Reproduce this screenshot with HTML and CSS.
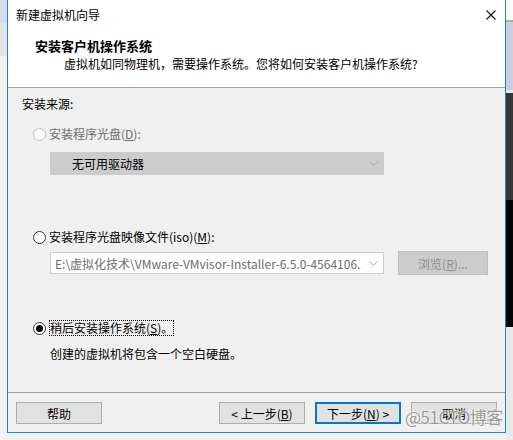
FILE: index.html
```html
<!DOCTYPE html>
<html lang="zh-CN">
<head>
    <meta charset="UTF-8">
    <title>新建虚拟机向导</title>
    <link rel="stylesheet" href="styles.css">
</head>
<body>
    <div class="desktop">
        <div class="side side-left"></div>

        <!-- Janela do assistente -->
        <div class="dialog">
            <div class="titlebar">
                <span>新建虚拟机向导</span>
                <svg class="close" width="10" height="10" viewBox="0 0 10 10">
                    <path d="M0.5 0.5 L9.5 9.5 M9.5 0.5 L0.5 9.5" stroke="#111" stroke-width="1.1"/>
                </svg>
            </div>

            <div class="header">
                <h1>安装客户机操作系统</h1>
                <p>虚拟机如同物理机，需要操作系统。您将如何安装客户机操作系统?</p>
            </div>

            <div class="content">
                <div class="group-label">安装来源:</div>

                <label class="radio disabled"><span class="dot"></span>安装程序光盘(<u>D</u>):</label>
                <div class="combo combo-off">
                    <span class="combo-text">无可用驱动器</span>
                    <svg class="chevron" width="9" height="5" viewBox="0 0 9 5"><path d="M0.5 0.5 L4.5 4.5 L8.5 0.5" fill="none" stroke="#aaa"/></svg>
                </div>

                <label class="radio radio-iso"><span class="dot"></span>安装程序光盘映像文件(iso)(<u>M</u>):</label>
                <div class="file-row">
                    <div class="combo combo-file">
                        <span class="combo-text">E:\虚拟化技术\VMware-VMvisor-Installer-6.5.0-4564106.x86_64.iso</span>
                        <svg class="chevron" width="9" height="5" viewBox="0 0 9 5"><path d="M0.5 0.5 L4.5 4.5 L8.5 0.5" fill="none" stroke="#aaa"/></svg>
                    </div>
                    <button class="btn btn-browse" disabled>浏览(<u>R</u>)...</button>
                </div>

                <label class="radio radio-later checked"><span class="dot"></span><span class="focus">稍后安装操作系统(<u>S</u>)。</span></label>
                <p class="note">创建的虚拟机将包含一个空白硬盘。</p>
            </div>

            <div class="footer">
                <button class="btn">帮助</button>
                <div class="spacer"></div>
                <button class="btn">&lt; 上一步(<u>B</u>)</button>
                <button class="btn btn-default">下一步(<u>N</u>) &gt;</button>
                <button class="btn">取消</button>
            </div>
        </div>

        <div class="side side-right"></div>
    </div>

    <div class="watermark">@51CTO博客</div>
</body>
</html>
```

FILE: styles.css
```css
* {
    box-sizing: border-box;
}

body {
    margin: 0;
    font-family: "Noto Sans CJK SC", "Noto Sans", sans-serif;
    font-size: 12px;
    color: #000;
    background-color: #f2f2f2;
    overflow: hidden;
}

.desktop {
    display: flex;
    height: 440px;
    position: relative;
}

.side-left {
    width: 7px;
    background: linear-gradient(to bottom, #d5dce7 0, #d5dce7 22px, #e4e4e4 22px, #e4e4e4 56px, #f3f3f3 56px);
}

.side-right {
    flex: 1;
    background: linear-gradient(to bottom, #fbfbfb 0, #fbfbfb 20px, #a9a9a9 20px, #a9a9a9 22px,
        #c9d0dc 22px, #c9d0dc 90px, #e8e8e8 90px, #e8e8e8 93px, #353535 93px, #353535 200px,
        #050505 200px, #050505 327px, #e9e9e9 327px);
}

.dialog {
    width: 499px;
    height: 433px;
    background-color: #f0f0f0;
    border: 1px solid #1883d7;
    border-top: none;
    display: flex;
    flex-direction: column;
}

.titlebar {
    height: 30px;
    background-color: #fff;
    display: flex;
    align-items: center;
    justify-content: space-between;
    padding: 0 9px 0 8px;
    line-height: 16px;
}

.header {
    height: 58px;
    background-color: #fff;
    border-bottom: 1px solid #a0a0a0;
    padding: 8px 0 0 27px;
}

.header h1 {
    margin: 0;
    font-size: 13px;
    font-weight: bold;
    line-height: 16px;
}

.header p {
    margin: 2px 0 0 29px;
    line-height: 16px;
}

.content {
    height: 305px;
    border-bottom: 1px solid #a0a0a0;
    padding: 8px 0 0 14px;
}

.group-label {
    line-height: 16px;
}

.radio {
    display: flex;
    align-items: center;
    line-height: 16px;
    margin-left: 11px;
    margin-top: 14px;
}

.radio .dot {
    width: 13px;
    height: 13px;
    border: 1px solid #333;
    border-radius: 50%;
    background-color: #fff;
    margin-right: 3px;
    display: flex;
    align-items: center;
    justify-content: center;
}

.radio.disabled {
    color: #6d6d6d;
}

.radio.disabled .dot {
    border-color: #bcbcbc;
}

.radio.checked .dot::after {
    content: "";
    width: 7px;
    height: 7px;
    border-radius: 50%;
    background-color: #000;
}

.radio-iso {
    margin-top: 54px;
}

.radio-later {
    margin-top: 45px;
}

.focus {
    border: 1px dotted #000;
    line-height: 14px;
}

.combo {
    display: flex;
    align-items: center;
    justify-content: space-between;
    margin-left: 28px;
    width: 334px;
    border: 1px solid #cccccc;
    padding: 0 5px 0 4px;
}

.combo-text {
    white-space: nowrap;
    overflow: hidden;
    flex: 1;
}

.combo-off {
    height: 23px;
    margin-top: 10px;
    background-color: #cccccc;
    padding-left: 21px;
}

.chevron {
    margin-left: 8px;
    flex-shrink: 0;
}

.file-row {
    display: flex;
    align-items: center;
    margin-top: 6px;
}

.combo-file {
    height: 22px;
    background-color: #fff;
    color: #6d6d6d;
    margin-right: 14px;
}

.btn {
    font-family: inherit;
    font-size: 12px;
    height: 22px;
    width: 86px;
    background-color: #e1e1e1;
    border: 1px solid #adadad;
    color: #000;
    padding: 0;
    margin: 0;
}

.btn-browse {
    width: 90px;
    height: 24px;
    background-color: #cccccc;
    border-color: #bfbfbf;
    color: #8c8c8c;
}

.note {
    margin: 10px 0 0 28px;
    line-height: 16px;
}

.footer {
    display: flex;
    align-items: flex-start;
    gap: 10px;
    padding: 9px 8px 0 8px;
    flex: 1;
}

.footer .spacer {
    flex: 1;
}

.btn-default {
    border: 2px solid #0078d7;
}

.watermark {
    position: absolute;
    left: 405px;
    top: 404px;
    font-size: 17px;
    letter-spacing: -0.5px;
    color: rgba(120, 120, 120, 0.75);
    text-shadow: 0 0 2px #fff, 0 0 2px #fff;
}
```
